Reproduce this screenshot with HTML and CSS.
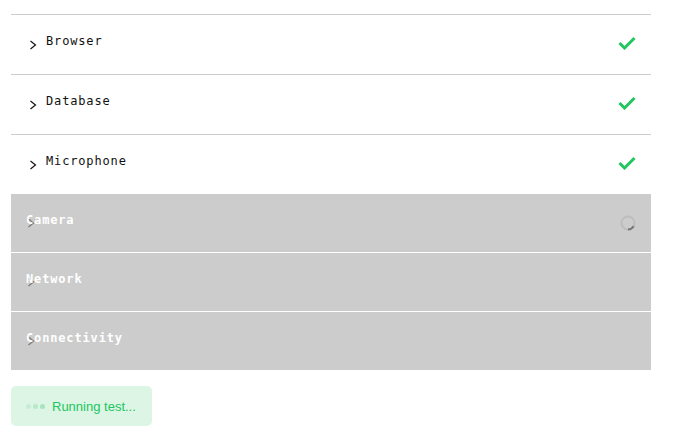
FILE: index.html
```html
<!DOCTYPE html>
<html>
<head>
<meta charset="utf-8">
<link rel="stylesheet" href="styles.css">
</head>
<body>
<div class="list">
  <div class="row done">
    <svg class="chev" width="8" height="10" viewBox="0 0 8 10"><path d="M1.5 1 L6.5 5 L1.5 9" fill="none" stroke="#111" stroke-width="1.2"/></svg>
    <span class="label">Browser</span>
    <svg class="check" width="18" height="14" viewBox="0 0 18 14"><path d="M1.5 7 L6.5 12 L16.5 2" fill="none" stroke="#22c55e" stroke-width="3"/></svg>
  </div>
  <div class="row done">
    <svg class="chev" width="8" height="10" viewBox="0 0 8 10"><path d="M1.5 1 L6.5 5 L1.5 9" fill="none" stroke="#111" stroke-width="1.2"/></svg>
    <span class="label">Database</span>
    <svg class="check" width="18" height="14" viewBox="0 0 18 14"><path d="M1.5 7 L6.5 12 L16.5 2" fill="none" stroke="#22c55e" stroke-width="3"/></svg>
  </div>
  <div class="row done">
    <svg class="chev" width="8" height="10" viewBox="0 0 8 10"><path d="M1.5 1 L6.5 5 L1.5 9" fill="none" stroke="#111" stroke-width="1.2"/></svg>
    <span class="label">Microphone</span>
    <svg class="check" width="18" height="14" viewBox="0 0 18 14"><path d="M1.5 7 L6.5 12 L16.5 2" fill="none" stroke="#22c55e" stroke-width="3"/></svg>
  </div>
  <div class="row pending">
    <svg class="chev-dim" width="8" height="10" viewBox="0 0 8 10"><path d="M1.5 1 L6.5 5 L1.5 9" fill="none" stroke="#777" stroke-width="1.2"/></svg>
    <span class="label">Camera</span>
    <svg class="spin" width="18" height="18" viewBox="0 0 18 18"><circle cx="9" cy="9" r="6.5" fill="none" stroke="#bdbdbd" stroke-width="2"/><path d="M14.6 12.3 A6.5 6.5 0 0 1 9 15.5" fill="none" stroke="#777" stroke-width="2"/></svg>
  </div>
  <div class="row pending">
    <svg class="chev-dim" width="8" height="10" viewBox="0 0 8 10"><path d="M1.5 1 L6.5 5 L1.5 9" fill="none" stroke="#777" stroke-width="1.2"/></svg>
    <span class="label">Network</span>
  </div>
  <div class="row pending">
    <svg class="chev-dim" width="8" height="10" viewBox="0 0 8 10"><path d="M1.5 1 L6.5 5 L1.5 9" fill="none" stroke="#777" stroke-width="1.2"/></svg>
    <span class="label">Connectivity</span>
  </div>
</div>
<div class="status">
  <span class="dots"><i class="d1"></i><i class="d2"></i><i class="d3"></i></span>
  <span class="status-text">Running test...</span>
</div>
</body>
</html>
```
FILE: styles.css
```css
html, body { margin: 0; padding: 0; background: #fff; }
body { padding: 14px 0 0 11px; }
.list { width: 640px; }
.row {
  position: relative;
  display: flex;
  align-items: flex-start;
  font-family: "DejaVu Sans Mono", "Liberation Mono", monospace;
  font-size: 12px;
  line-height: 14px;
  letter-spacing: 0.85px;
}
.row.done {
  border-top: 1px solid #cccccc;
  padding: 19px 0 0 18px;
  height: 40px;
  color: #111;
}
.row.done .chev { margin-top: 6px; margin-right: 9px; }
.row.done .check { margin-left: auto; margin-right: 15px; margin-top: 2px; }
.row.pending {
  background: #cccccc;
  height: 39px;
  padding: 19px 0 0 15px;
  border-bottom: 1px solid #fff;
  color: #fff;
  font-weight: bold;
}
.row.pending .label { position: relative; }
.chev-dim { position: absolute; left: 16px; top: 24px; }
.spin { position: absolute; right: 14px; top: 20px; }
.status {
  margin-top: 15px;
  width: 141px;
  height: 40px;
  box-sizing: border-box;
  background: #dcf5e5;
  border-radius: 5px;
  display: flex;
  align-items: center;
  padding-left: 15px;
  font-family: "Liberation Sans", Arial, sans-serif;
  font-size: 13px;
  color: #22c55e;
}
.dots { display: flex; gap: 2px; margin-right: 7px; }
.dots i { width: 5px; height: 5px; border-radius: 50%; display: block; }
.d1 { background: #c5eed3; }
.d2 { background: #b6e9c8; }
.d3 { background: #a8e4bd; }
```
